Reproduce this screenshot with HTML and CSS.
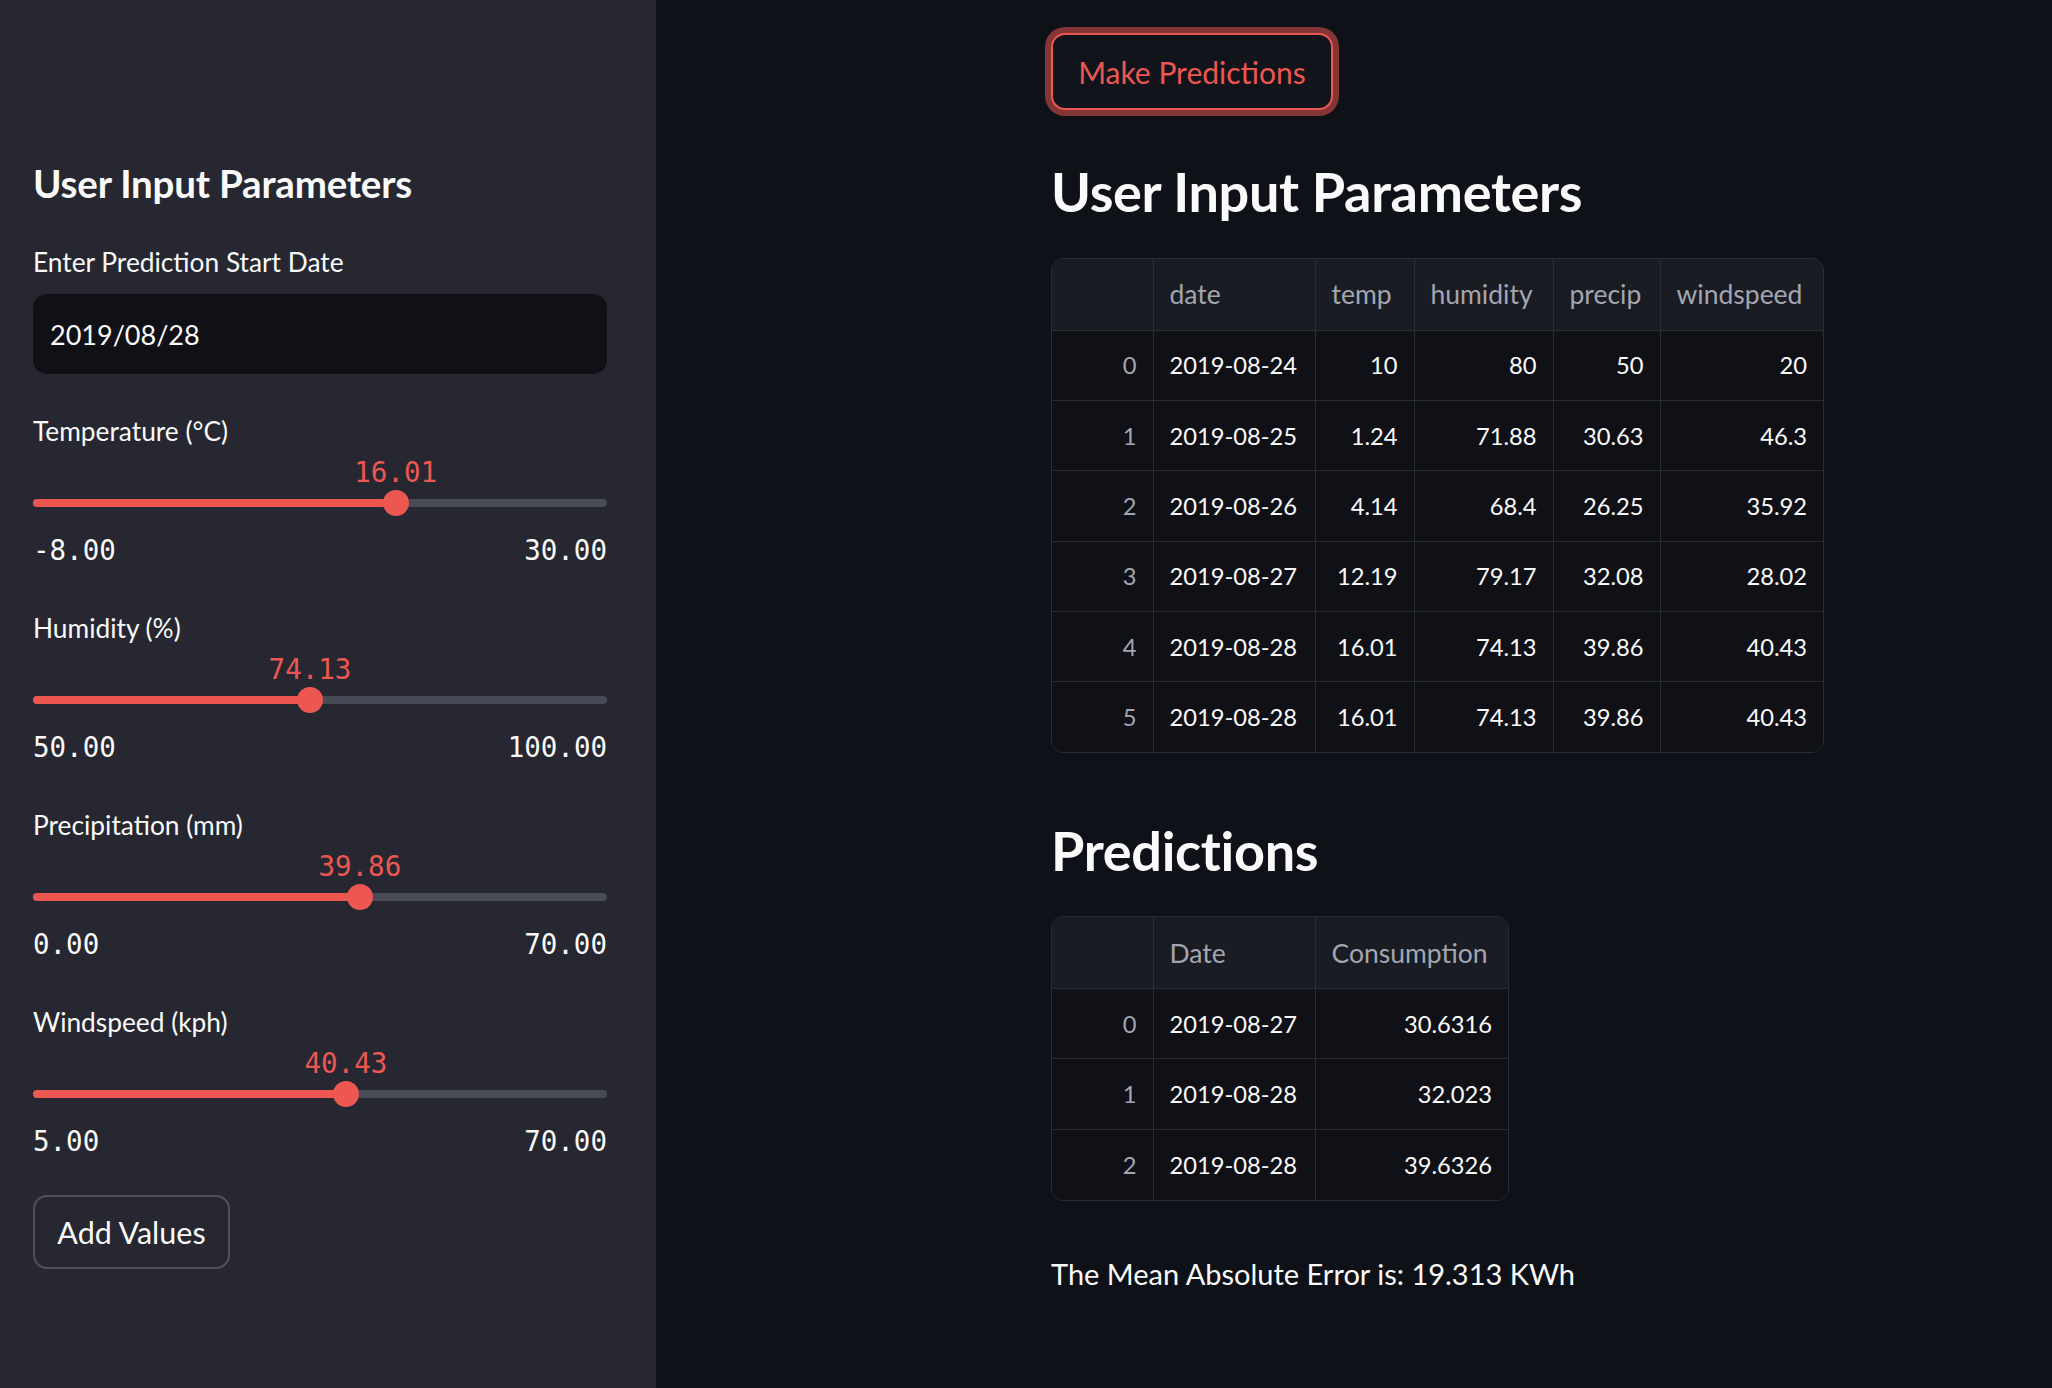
FILE: index.html
```html
<!DOCTYPE html>
<html lang="en">
<head>
<meta charset="utf-8">
<title>Energy Consumption Predictions</title>
<link rel="stylesheet" href="styles.css">
</head>
<body>
<div class="app">
  <aside class="sidebar">
    <h2 class="side-title">User Input Parameters</h2>
    <div class="field">
      <div class="field-label">Enter Prediction Start Date</div>
      <div class="date-input">2019/08/28</div>
    </div>

    <div class="slider">
      <div class="field-label">Temperature (°C)</div>
      <div class="slider-area">
        <div class="track">
          <div class="fill" style="width:63.18%"></div>
          <div class="thumb" style="left:63.18%"><span class="thumb-value">16.01</span></div>
        </div>
      </div>
      <div class="minmax"><span>-8.00</span><span>30.00</span></div>
    </div>

    <div class="slider">
      <div class="field-label">Humidity (%)</div>
      <div class="slider-area">
        <div class="track">
          <div class="fill" style="width:48.26%"></div>
          <div class="thumb" style="left:48.26%"><span class="thumb-value">74.13</span></div>
        </div>
      </div>
      <div class="minmax"><span>50.00</span><span>100.00</span></div>
    </div>

    <div class="slider">
      <div class="field-label">Precipitation (mm)</div>
      <div class="slider-area">
        <div class="track">
          <div class="fill" style="width:56.94%"></div>
          <div class="thumb" style="left:56.94%"><span class="thumb-value">39.86</span></div>
        </div>
      </div>
      <div class="minmax"><span>0.00</span><span>70.00</span></div>
    </div>

    <div class="slider">
      <div class="field-label">Windspeed (kph)</div>
      <div class="slider-area">
        <div class="track">
          <div class="fill" style="width:54.51%"></div>
          <div class="thumb" style="left:54.51%"><span class="thumb-value">40.43</span></div>
        </div>
      </div>
      <div class="minmax"><span>5.00</span><span>70.00</span></div>
    </div>

    <button class="secondary-btn">Add Values</button>
  </aside>

  <main class="main">
    <div class="content">
      <button class="primary-btn">Make Predictions</button>

      <h2 class="main-title">User Input Parameters</h2>
      <div class="table-wrap">
        <table class="df df-inputs">
          <colgroup>
            <col class="c-idx"><col class="c-date"><col class="c-temp"><col class="c-hum"><col class="c-prec"><col class="c-wind">
          </colgroup>
          <thead>
            <tr><th></th><th>date</th><th>temp</th><th>humidity</th><th>precip</th><th>windspeed</th></tr>
          </thead>
          <tbody>
            <tr><td class="idx">0</td><td class="txt">2019-08-24</td><td>10</td><td>80</td><td>50</td><td>20</td></tr>
            <tr><td class="idx">1</td><td class="txt">2019-08-25</td><td>1.24</td><td>71.88</td><td>30.63</td><td>46.3</td></tr>
            <tr><td class="idx">2</td><td class="txt">2019-08-26</td><td>4.14</td><td>68.4</td><td>26.25</td><td>35.92</td></tr>
            <tr><td class="idx">3</td><td class="txt">2019-08-27</td><td>12.19</td><td>79.17</td><td>32.08</td><td>28.02</td></tr>
            <tr><td class="idx">4</td><td class="txt">2019-08-28</td><td>16.01</td><td>74.13</td><td>39.86</td><td>40.43</td></tr>
            <tr><td class="idx">5</td><td class="txt">2019-08-28</td><td>16.01</td><td>74.13</td><td>39.86</td><td>40.43</td></tr>
          </tbody>
        </table>
      </div>

      <h2 class="main-title predictions-title">Predictions</h2>
      <div class="table-wrap">
        <table class="df df-preds">
          <colgroup>
            <col class="c-idx"><col class="c-date"><col class="c-cons">
          </colgroup>
          <thead>
            <tr><th></th><th>Date</th><th>Consumption</th></tr>
          </thead>
          <tbody>
            <tr><td class="idx">0</td><td class="txt">2019-08-27</td><td>30.6316</td></tr>
            <tr><td class="idx">1</td><td class="txt">2019-08-28</td><td>32.023</td></tr>
            <tr><td class="idx">2</td><td class="txt">2019-08-28</td><td>39.6326</td></tr>
          </tbody>
        </table>
      </div>

      <p class="mae">The Mean Absolute Error is: 19.313 KWh</p>
    </div>
  </main>
</div>
</body>
</html>
```

FILE: styles.css
```css
* { box-sizing: border-box; }

html, body {
  margin: 0;
  padding: 0;
  height: 100%;
}

body {
  font-family: "Lato", "Open Sans", "Liberation Sans", sans-serif;
  color: #fafafa;
  background: #0e1117;
}

.app {
  display: flex;
  height: 1388px;
  overflow: hidden;
}

/* ---------- Sidebar ---------- */
.sidebar {
  width: 656px;
  flex: 0 0 656px;
  background: #262730;
  padding: 153px 49px 0 33px;
  display: flex;
  flex-direction: column;
  align-items: stretch;
}

.side-title {
  margin: 0 0 29px 0;
  font-size: 38.5px;
  line-height: 60px;
  font-weight: 700;
  letter-spacing: -0.2px;
}

.field-label {
  font-size: 26.3px;
  line-height: 40px;
  height: 40px;
  color: #fafafa;
}

.date-input {
  margin-top: 12px;
  height: 80px;
  background: #0f1116;
  border-radius: 14px;
  padding: 0 17px;
  display: flex;
  align-items: center;
  font-size: 27px;
  margin-bottom: 37px;
}

.slider {
  margin-bottom: 38px;
}

.slider-area {
  padding-top: 48px;
}

.track {
  position: relative;
  height: 8px;
  border-radius: 4px;
  background: #484a56;
}

.fill {
  height: 100%;
  border-radius: 4px;
  background: #ec5752;
}

.thumb {
  position: absolute;
  top: 50%;
  width: 26px;
  height: 26px;
  border-radius: 50%;
  background: #ec5752;
  transform: translate(-50%, -50%);
}

.thumb-value {
  position: absolute;
  left: 50%;
  top: -33px;
  transform: translateX(-50%);
  font-family: "DejaVu Sans Mono", "Liberation Mono", monospace;
  font-size: 27.5px;
  line-height: 30px;
  color: #ec5752;
  white-space: nowrap;
}

.minmax {
  margin-top: 23px;
  display: flex;
  justify-content: space-between;
  font-family: "DejaVu Sans Mono", "Liberation Mono", monospace;
  font-size: 27.5px;
  line-height: 40px;
  color: #fafafa;
}

.secondary-btn {
  align-self: flex-start;
  margin-top: -4px;
  width: 197px;
  height: 74px;
  background: #262730;
  color: #fafafa;
  border: 2px solid #50515a;
  border-radius: 14px;
  font-family: inherit;
  font-size: 30.5px;
  padding: 0;
  cursor: pointer;
}

/* ---------- Main ---------- */
.main {
  flex: 1;
  background: #0e1117;
  padding: 33px 0 0 395px;
}

.content {
  display: flex;
  flex-direction: column;
  align-items: flex-start;
}

.primary-btn {
  width: 282px;
  height: 77px;
  background: #12141b;
  color: #ec5752;
  border: 2px solid #ec5752;
  border-radius: 14px;
  box-shadow: 0 0 0 6px #843535;
  font-family: inherit;
  font-size: 30px;
  padding: 0;
  cursor: pointer;
}

.main-title {
  margin: 47px 0 31px 0;
  font-size: 54px;
  line-height: 70px;
  font-weight: 700;
  letter-spacing: -0.3px;
}

.predictions-title {
  margin: 63px 0 30px 0;
}

.table-wrap {
  border: 1px solid #2b2d35;
  border-radius: 12px;
  overflow: hidden;
}

.df {
  border-collapse: collapse;
  table-layout: fixed;
  font-size: 23.7px;
}

.df-inputs { width: 771px; }
.df-preds { width: 456px; }

.c-idx { width: 101px; }
.c-date { width: 162px; }
.c-temp { width: 99px; }
.c-hum { width: 139px; }
.c-prec { width: 107px; }
.c-wind { width: 163px; }
.c-cons { width: 193px; }

.df th {
  height: 71px;
  background: #1a1c24;
  color: #a3a6b0;
  font-size: 26.5px;
  font-weight: 400;
  text-align: left;
  padding: 0 14px 0 16px;
  border-right: 1px solid #2b2d35;
  border-bottom: 1px solid #2b2d35;
  white-space: nowrap;
  overflow: hidden;
}

.df td {
  height: 70.4px;
  background: #0f1116;
  text-align: right;
  padding: 0 16px;
  border-right: 1px solid #2b2d35;
  border-bottom: 1px solid #2b2d35;
  white-space: nowrap;
  overflow: hidden;
}

.df td.txt { text-align: left; }
.df td.idx { color: #a3a6b0; }

.df tr > :last-child { border-right: none; }
.df tbody tr:last-child td { border-bottom: none; }

.mae {
  margin: 53px 0 0 0;
  font-size: 29px;
  line-height: 40px;
}
```
